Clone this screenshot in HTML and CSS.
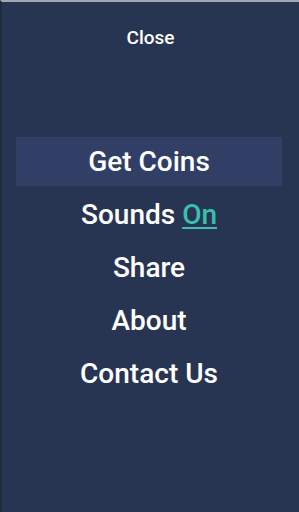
FILE: index.html
```html
<!DOCTYPE html>
<html lang="en">
<head>
    <meta charset="UTF-8">
    <meta name="viewport" content="width=device-width, initial-scale=1.0">
    <title>Menu</title>
    <link rel="stylesheet" href="styles.css">
</head>
<body>
    <div class="screen">
        <div class="close">Close</div>
        <ul class="menu">
            <li class="item active">Get Coins</li>
            <li class="item">Sounds <span class="toggle">On</span></li>
            <li class="item">Share</li>
            <li class="item">About</li>
            <li class="item">Contact Us</li>
        </ul>
    </div>
</body>
</html>
```

FILE: styles.css
```css
html, body {
    margin: 0;
    padding: 0;
    background-color: #283552;
}
.screen {
    box-sizing: border-box;
    height: 512px;
    background-color: #283552;
    border-top: 2px solid #a3a9ae;
    border-left: 2px solid #1e2d3c;
    font-family: Roboto, "Liberation Sans", sans-serif;
    color: #fff;
    padding-top: 26px;
}
.close {
    text-align: center;
    font-size: 19px;
    font-weight: 500;
    line-height: 20px;
}
.menu {
    list-style: none;
    margin: 89px 0 0 0;
    padding: 0 17px 0 14px;
}
.item {
    height: 49px;
    line-height: 50px;
    margin-bottom: 4px;
    text-align: center;
    font-size: 28px;
    font-weight: 500;
}
.active {
    background-color: #313f66;
}
.toggle {
    color: #3bbfae;
    text-decoration: underline;
    text-underline-offset: 3px;
}
```
